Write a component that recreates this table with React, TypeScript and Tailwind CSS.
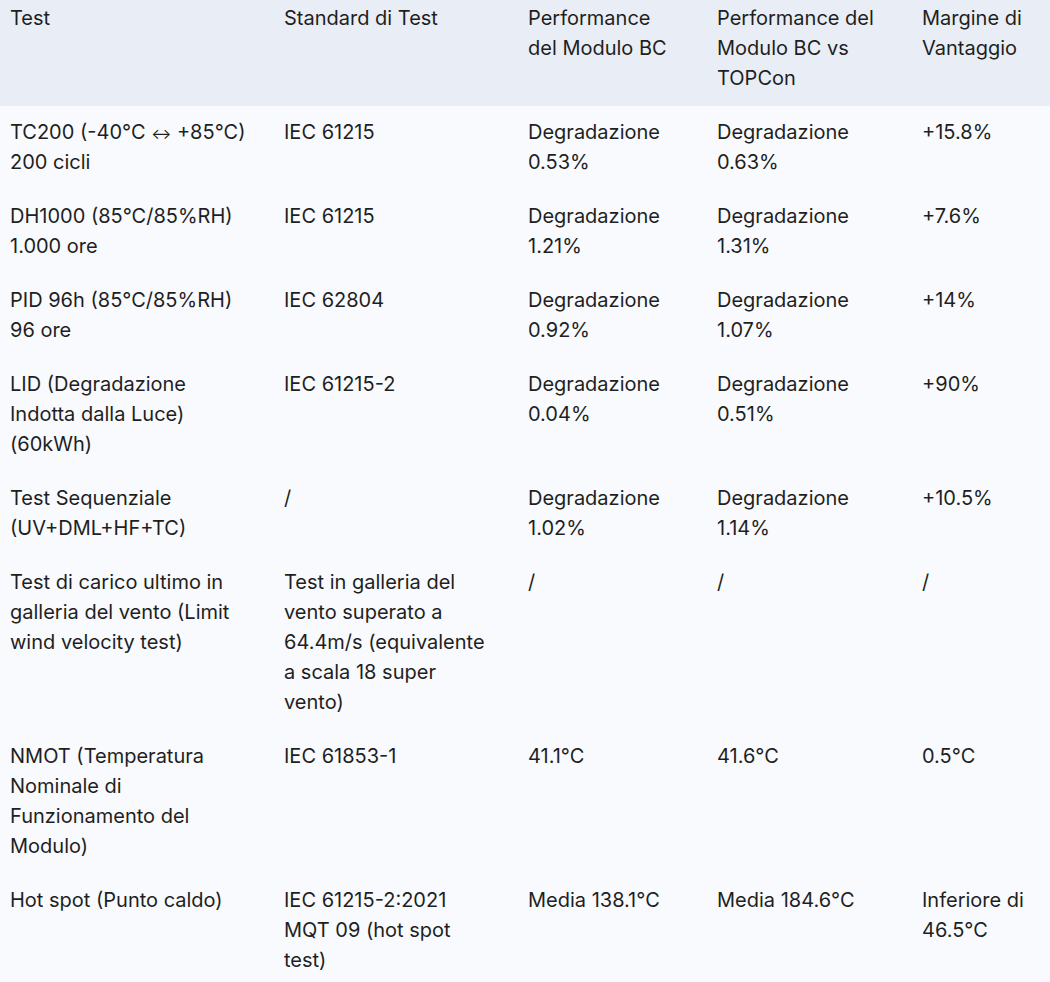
import type { ReactNode } from 'react';

const header = [
  'Test',
  'Standard di Test',
  'Performance del Modulo BC',
  'Performance del Modulo BC vs TOPCon',
  'Margine di Vantaggio',
];

const rows: ReactNode[][] = [
  [
    <>
      TC200 (-40°C <span className="text-[15px] leading-none">↔</span> +85°C) 200 cicli
    </>,
    'IEC 61215',
    'Degradazione 0.53%',
    'Degradazione 0.63%',
    '+15.8%',
  ],
  ['DH1000 (85°C/85%RH) 1.000 ore', 'IEC 61215', 'Degradazione 1.21%', 'Degradazione 1.31%', '+7.6%'],
  ['PID 96h (85°C/85%RH) 96 ore', 'IEC 62804', 'Degradazione 0.92%', 'Degradazione 1.07%', '+14%'],
  ['LID (Degradazione Indotta dalla Luce) (60kWh)', 'IEC 61215-2', 'Degradazione 0.04%', 'Degradazione 0.51%', '+90%'],
  ['Test Sequenziale (UV+DML+HF+TC)', '/', 'Degradazione 1.02%', 'Degradazione 1.14%', '+10.5%'],
  [
    'Test di carico ultimo in galleria del vento (Limit wind velocity test)',
    'Test in galleria del vento superato a 64.4m/s (equivalente a scala 18 super vento)',
    '/',
    '/',
    '/',
  ],
  ['NMOT (Temperatura Nominale di Funzionamento del Modulo)', 'IEC 61853-1', '41.1°C', '41.6°C', '0.5°C'],
  ['Hot spot (Punto caldo)', 'IEC 61215-2:2021 MQT 09 (hot spot test)', 'Media 138.1°C', 'Media 184.6°C', 'Inferiore di 46.5°C'],
];

// right padding per column, tuned so the lines break where the source does
const pad = ['pl-[10px] pr-[24px]', 'pl-[10px] pr-[32px]', 'pl-[10px] pr-[30px]', 'pl-[10px] pr-[30px]', 'pl-[10px] pr-[10px]'];

export default function App() {
  return (
    <div className="min-h-screen w-[1050px] bg-[#f8fafd] font-['Inter',sans-serif] text-[20px] leading-[30px] text-[#1f1f1f]">
      <table className="w-[1050px] table-fixed border-collapse text-left">
        <colgroup>
          <col className="w-[274px]" />
          <col className="w-[244px]" />
          <col className="w-[189px]" />
          <col className="w-[205px]" />
          <col className="w-[138px]" />
        </colgroup>
        <thead className="bg-[#e9eef6]">
          <tr>
            {header.map((h, i) => (
              <th key={h} className={`${pad[i]} pt-[3px] pb-[13px] align-top font-normal`}>
                {h}
              </th>
            ))}
          </tr>
        </thead>
        <tbody>
          {rows.map((r, ri) => (
            <tr key={ri}>
              {r.map((c, i) => (
                <td key={i} className={`${pad[i]} pt-[11px] pb-[13px] align-top`}>
                  {c}
                </td>
              ))}
            </tr>
          ))}
        </tbody>
      </table>
    </div>
  );
}
